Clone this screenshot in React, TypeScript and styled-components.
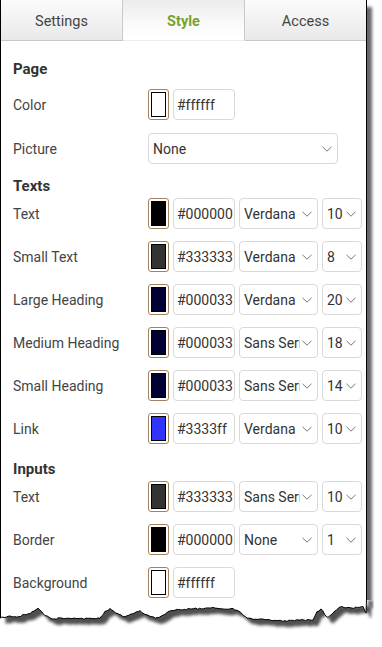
import { FC } from 'react'
import styled, { createGlobalStyle } from 'styled-components'

const Global = createGlobalStyle`
  html, body {
    margin: 0;
    padding: 0;
    background: #fff;
  }
  body {
    font-family: Roboto, "Liberation Sans", Arial, sans-serif;
    color: #333;
  }
`

const Page = styled.div`
  width: 382px;
  height: 647px;
  overflow: hidden;
  background: #fff;
`

const Frame = styled.div`
  width: 367px;
  box-sizing: border-box;
  border-left: 1px solid #000;
  border-right: 1px solid #000;
  background: #fff;
  box-shadow: 5px 7px 3px rgba(0, 0, 0, 0.6);
  padding-bottom: 2px;
`

const TabBar = styled.div`
  display: flex;
  height: 41px;
`

const Tab = styled.div<{ $active?: boolean }>`
  flex: 1;
  display: flex;
  align-items: center;
  justify-content: center;
  padding-top: 2px;
  font-size: 14.5px;
  color: ${p => (p.$active ? '#79a22e' : '#444')};
  font-weight: ${p => (p.$active ? 700 : 400)};
  background: ${p =>
    p.$active
      ? 'linear-gradient(#ececec, #fafafa 60%, #fff)'
      : 'linear-gradient(#fbfbfb, #e9e9e9)'};
  border-bottom: ${p => (p.$active ? '1px solid transparent' : '1px solid #c9c9c9')};
  border-right: 1px solid #c9c9c9;

  &:last-child {
    border-right: none;
  }
`

const Body = styled.div`
  padding: 0 0 0 12px;
  display: flex;
  flex-direction: column;
`

const SectionTitle = styled.div<{ $top: number }>`
  font-size: 15px;
  line-height: 20px;
  font-weight: 700;
  color: #333;
  margin-top: ${p => p.$top}px;
`

const Row = styled.div<{ $top: number }>`
  display: flex;
  align-items: center;
  height: 31px;
  margin-top: ${p => p.$top}px;
`

const Label = styled.div`
  width: 135px;
  font-size: 14px;
  color: #444;
`

const Swatch = styled.div<{ $color: string }>`
  width: 21px;
  height: 31px;
  box-sizing: border-box;
  border: 1px solid #a3835f;
  border-radius: 3px;
  padding: 2px;
  margin-right: 4px;

  &::after {
    content: '';
    display: block;
    height: 100%;
    box-sizing: border-box;
    border: 1px solid #000;
    background: ${p => p.$color};
  }
`

const HexInput = styled.input`
  width: 62px;
  height: 31px;
  box-sizing: border-box;
  border: 1px solid #d9d9d9;
  border-radius: 4px;
  padding: 0 0 0 3px;
  margin: 0 4px 0 0;
  font-family: inherit;
  font-size: 14px;
  color: #333;
  background: #fff;
  outline: none;
`

const SelectBox = styled.div<{ $width: number }>`
  width: ${p => p.$width}px;
  height: 31px;
  box-sizing: border-box;
  border: 1px solid #d9d9d9;
  border-radius: 4px;
  display: flex;
  align-items: center;
  padding: 0 5px 0 4px;
  margin-right: 4px;
  font-size: 14px;
  color: #333;
  background: #fff;

  span {
    flex: 1;
    min-width: 0;
    overflow: hidden;
    white-space: nowrap;
  }

  svg {
    flex: none;
    margin-left: 2px;
  }
`

const Chevron: FC = () => (
  <svg width="10" height="6" viewBox="0 0 10 6">
    <path d="M0.5 0.8 L5 5.2 L9.5 0.8" fill="none" stroke="#777" strokeWidth="1" />
  </svg>
)

const Select: FC<{ value: string; width: number }> = ({ value, width }) => (
  <SelectBox $width={width}>
    <span>{value}</span>
    <Chevron />
  </SelectBox>
)

interface StyleRow {
  label: string
  color: string
  hex: string
  font?: string
  size?: string
}

const textRows: StyleRow[] = [
  { label: 'Text', color: '#000000', hex: '#000000', font: 'Verdana', size: '10' },
  { label: 'Small Text', color: '#333333', hex: '#333333', font: 'Verdana', size: '8' },
  { label: 'Large Heading', color: '#000033', hex: '#000033', font: 'Verdana', size: '20' },
  { label: 'Medium Heading', color: '#000033', hex: '#000033', font: 'Sans Serif', size: '18' },
  { label: 'Small Heading', color: '#000033', hex: '#000033', font: 'Sans Serif', size: '14' },
  { label: 'Link', color: '#3333ff', hex: '#3333ff', font: 'Verdana', size: '10' },
]

const inputRows: StyleRow[] = [
  { label: 'Text', color: '#333333', hex: '#333333', font: 'Sans Serif', size: '10' },
  { label: 'Border', color: '#000000', hex: '#000000', font: 'None', size: '1' },
  { label: 'Background', color: '#ffffff', hex: '#ffffff' },
]

const ColorRow: FC<{ row: StyleRow; top: number }> = ({ row, top }) => (
  <Row $top={top}>
    <Label>{row.label}</Label>
    <Swatch $color={row.color} />
    <HexInput defaultValue={row.hex} readOnly />
    {row.font && <Select value={row.font} width={79} />}
    {row.size && <Select value={row.size} width={40} />}
  </Row>
)

// jagged bottom edge of the clipped screenshot, x -> y (from right to left)
const tornPoints: [number, number][] = [
  [366, 13], [363, 7], [352, 8], [340, 7], [333, 13], [328, 18], [321, 9], [317, 12],
  [313, 20], [300, 20], [285, 21], [267, 20], [255, 19], [247, 18], [240, 12], [233, 9],
  [215, 8], [190, 9], [173, 10], [167, 13], [157, 18], [150, 17], [140, 11], [135, 13],
  [125, 17], [117, 14], [110, 9], [105, 12], [100, 18], [80, 19], [60, 18], [53, 19],
  [45, 15], [38, 8], [30, 13], [17, 17], [10, 16], [0, 18],
]

const roughEdge = () => {
  const pts: string[] = []
  let seed = 7
  for (let i = 0; i < tornPoints.length - 1; i++) {
    const [x1, y1] = tornPoints[i]
    const [x2, y2] = tornPoints[i + 1]
    const steps = Math.max(1, Math.round((x1 - x2) / 2))
    for (let s = 0; s < steps; s++) {
      const t = s / steps
      seed = (seed * 9301 + 49297) % 233280
      const j = (seed / 233280 - 0.5) * 1.4
      pts.push(`${(x1 + (x2 - x1) * t).toFixed(1)},${(y1 + (y2 - y1) * t + j).toFixed(1)}`)
    }
  }
  pts.push('0.5,18')
  return pts
}

const TornSvg = styled.svg`
  display: block;
`

const TornEdge: FC = () => {
  const edge = roughEdge()
  const shape = `M0.5,0 L366.5,0 L${edge.join(' L')} Z`
  return (
    <TornSvg width="382" height="47" viewBox="0 0 382 47">
      <defs>
        <filter id="tornBlur" x="-10%" y="-50%" width="120%" height="200%">
          <feGaussianBlur stdDeviation="1.6" />
        </filter>
      </defs>
      <rect x="0" y="0" width="382" height="47" fill="#fff" />
      <path d={shape} fill="#333" opacity="0.85" transform="translate(5 6)" filter="url(#tornBlur)" />
      <rect x="368" y="0" width="5" height="8" fill="#666" filter="url(#tornBlur)" />
      <path d={shape} fill="#fff" />
      <path
        d={`M0.5,0 L0.5,18 M366.5,0 L${edge.join(' L')}`}
        fill="none"
        stroke="#000"
        strokeWidth="1"
      />
    </TornSvg>
  )
}

const App: FC = () => (
  <Page>
    <Global />
    <Frame>
      <TabBar>
        <Tab>Settings</Tab>
        <Tab $active>Style</Tab>
        <Tab>Access</Tab>
      </TabBar>
      <Body>
        <SectionTitle $top={18}>Page</SectionTitle>
        <ColorRow row={{ label: 'Color', color: '#ffffff', hex: '#ffffff' }} top={10} />
        <Row $top={13}>
          <Label>Picture</Label>
          <Select value="None" width={190} />
        </Row>

        <SectionTitle $top={12}>Texts</SectionTitle>
        {textRows.map((r, i) => (
          <ColorRow key={r.label} row={r} top={i === 0 ? 2 : 12} />
        ))}

        <SectionTitle $top={15}>Inputs</SectionTitle>
        {inputRows.map((r, i) => (
          <ColorRow key={r.label} row={r} top={i === 0 ? 2 : 12} />
        ))}
      </Body>
    </Frame>
    <TornEdge />
  </Page>
)

export default App
